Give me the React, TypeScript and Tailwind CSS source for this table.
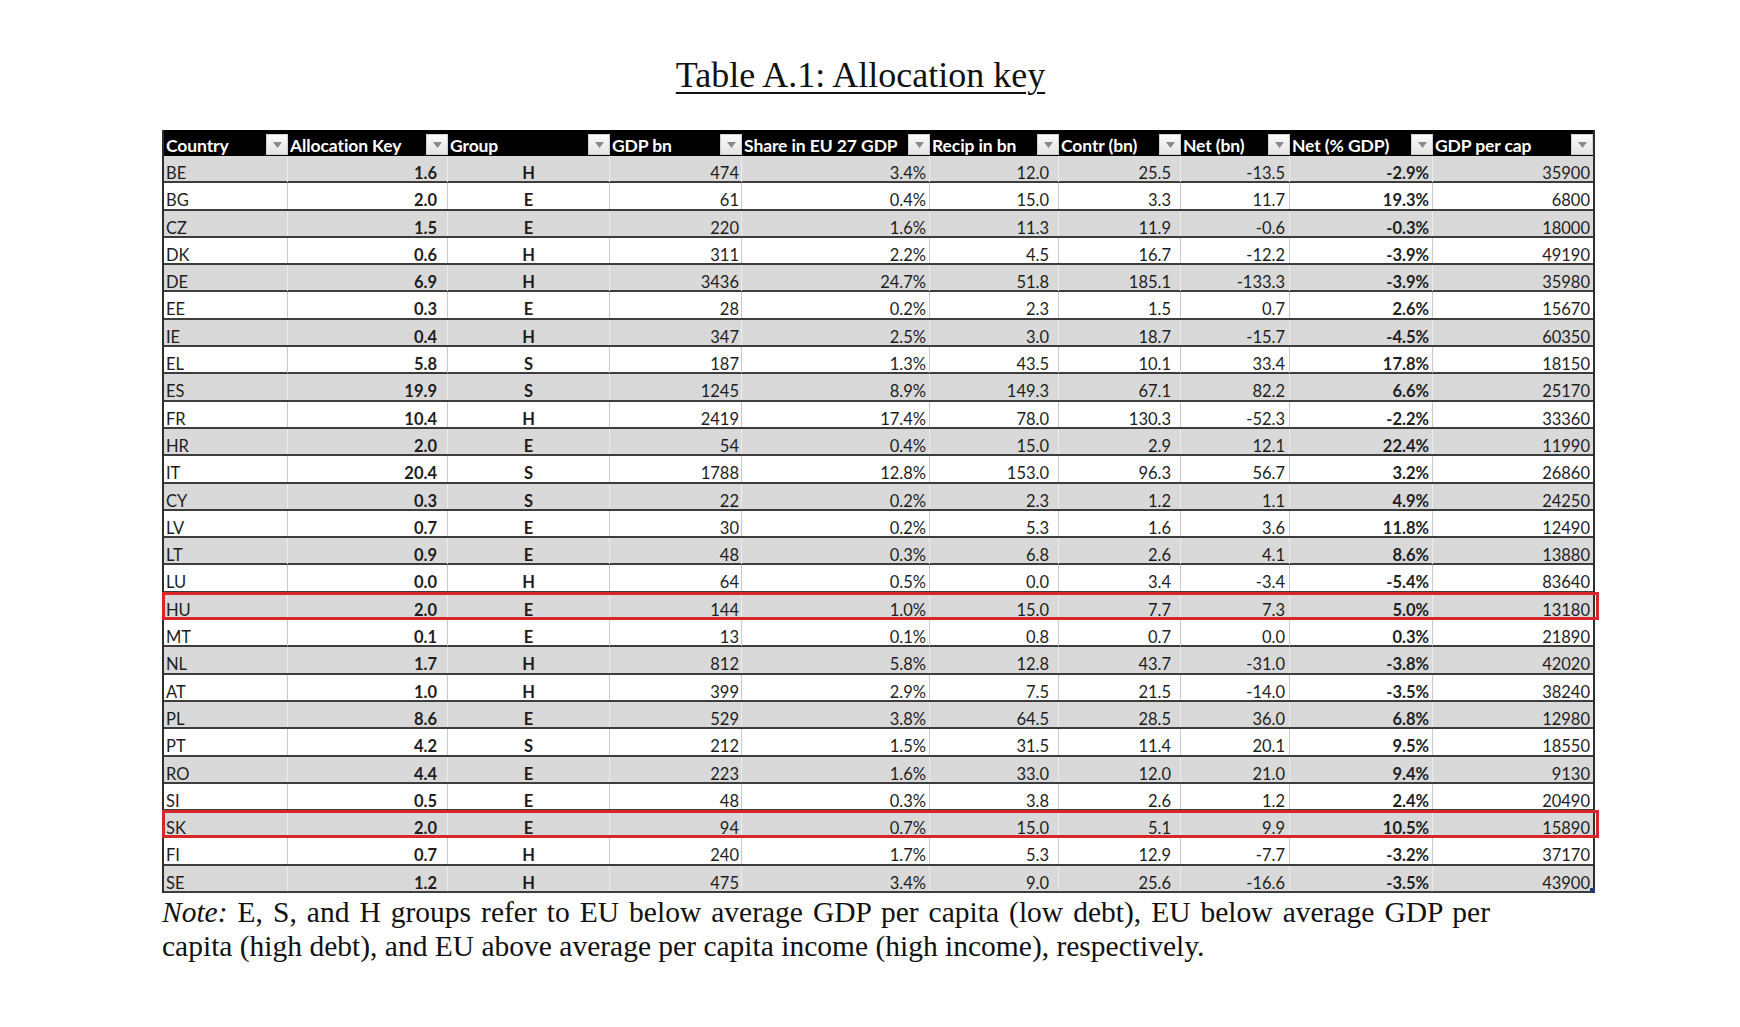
import React from 'react';

type Row = [string, string, string, string, string, string, string, string, string, string];

const rows: Row[] = [
  ['BE', '1.6', 'H', '474', '3.4%', '12.0', '25.5', '-13.5', '-2.9%', '35900'],
  ['BG', '2.0', 'E', '61', '0.4%', '15.0', '3.3', '11.7', '19.3%', '6800'],
  ['CZ', '1.5', 'E', '220', '1.6%', '11.3', '11.9', '-0.6', '-0.3%', '18000'],
  ['DK', '0.6', 'H', '311', '2.2%', '4.5', '16.7', '-12.2', '-3.9%', '49190'],
  ['DE', '6.9', 'H', '3436', '24.7%', '51.8', '185.1', '-133.3', '-3.9%', '35980'],
  ['EE', '0.3', 'E', '28', '0.2%', '2.3', '1.5', '0.7', '2.6%', '15670'],
  ['IE', '0.4', 'H', '347', '2.5%', '3.0', '18.7', '-15.7', '-4.5%', '60350'],
  ['EL', '5.8', 'S', '187', '1.3%', '43.5', '10.1', '33.4', '17.8%', '18150'],
  ['ES', '19.9', 'S', '1245', '8.9%', '149.3', '67.1', '82.2', '6.6%', '25170'],
  ['FR', '10.4', 'H', '2419', '17.4%', '78.0', '130.3', '-52.3', '-2.2%', '33360'],
  ['HR', '2.0', 'E', '54', '0.4%', '15.0', '2.9', '12.1', '22.4%', '11990'],
  ['IT', '20.4', 'S', '1788', '12.8%', '153.0', '96.3', '56.7', '3.2%', '26860'],
  ['CY', '0.3', 'S', '22', '0.2%', '2.3', '1.2', '1.1', '4.9%', '24250'],
  ['LV', '0.7', 'E', '30', '0.2%', '5.3', '1.6', '3.6', '11.8%', '12490'],
  ['LT', '0.9', 'E', '48', '0.3%', '6.8', '2.6', '4.1', '8.6%', '13880'],
  ['LU', '0.0', 'H', '64', '0.5%', '0.0', '3.4', '-3.4', '-5.4%', '83640'],
  ['HU', '2.0', 'E', '144', '1.0%', '15.0', '7.7', '7.3', '5.0%', '13180'],
  ['MT', '0.1', 'E', '13', '0.1%', '0.8', '0.7', '0.0', '0.3%', '21890'],
  ['NL', '1.7', 'H', '812', '5.8%', '12.8', '43.7', '-31.0', '-3.8%', '42020'],
  ['AT', '1.0', 'H', '399', '2.9%', '7.5', '21.5', '-14.0', '-3.5%', '38240'],
  ['PL', '8.6', 'E', '529', '3.8%', '64.5', '28.5', '36.0', '6.8%', '12980'],
  ['PT', '4.2', 'S', '212', '1.5%', '31.5', '11.4', '20.1', '9.5%', '18550'],
  ['RO', '4.4', 'E', '223', '1.6%', '33.0', '12.0', '21.0', '9.4%', '9130'],
  ['SI', '0.5', 'E', '48', '0.3%', '3.8', '2.6', '1.2', '2.4%', '20490'],
  ['SK', '2.0', 'E', '94', '0.7%', '15.0', '5.1', '9.9', '10.5%', '15890'],
  ['FI', '0.7', 'H', '240', '1.7%', '5.3', '12.9', '-7.7', '-3.2%', '37170'],
  ['SE', '1.2', 'H', '475', '3.4%', '9.0', '25.6', '-16.6', '-3.5%', '43900'],
];

const headers = [
  'Country',
  'Allocation Key',
  'Group',
  'GDP bn',
  'Share in EU 27 GDP',
  'Recip in bn',
  'Contr (bn)',
  'Net (bn)',
  'Net (% GDP)',
  'GDP per cap',
];

// per-column cell alignment (matches the spreadsheet's number formats)
const cellClass = [
  'justify-start pl-[2px]',
  'justify-end pr-[10px] font-bold',
  'justify-center font-bold',
  'justify-end pr-[2px]',
  'justify-end pr-[3px]',
  'justify-end pr-[9px]',
  'justify-end pr-[9px]',
  'justify-end pr-[4px]',
  'justify-end pr-[3px] font-bold',
  'justify-end pr-[3px]',
];

const highlighted = ['HU', 'SK'];

const cols = 'grid grid-cols-[124px_160px_162px_132px_188px_129px_122px_109px_143px_160px]';

const Dropdown = () => (
  <div className="w-[22px] h-[21px] shrink-0 self-end bg-gradient-to-b from-[#fbfbfb] to-[#e4e4e4] border border-[#cfcfcf] flex items-center justify-center">
    <svg width="9" height="6" viewBox="0 0 9 6">
      <path d="M0 0 L9 0 L4.5 6 Z" fill="#8a8a8a" />
    </svg>
  </div>
);

const App = () => {
  return (
    <div className="min-h-screen w-full bg-white font-['Lato',sans-serif]">
      <div className="ml-[162px] w-[1433px] pt-[57px]">
        <h1 className="pr-[36px] text-center font-['Liberation_Serif',serif] text-[36px] leading-[36px] text-[#111] underline decoration-2 underline-offset-[5px]">
          Table A.1: Allocation key
        </h1>

        <div className="mt-[37px] border-x-2 border-[#2e2e2e]">
          <div className={`${cols} h-[26px] bg-black`}>
            {headers.map((h) => (
              <div key={h} className="flex items-center pl-[2px] pb-[1px]">
                <span className="flex-1 text-white font-bold text-[17.5px] leading-none whitespace-nowrap overflow-hidden pt-[7px] tracking-[-0.1px]">
                  {h}
                </span>
                <Dropdown />
              </div>
            ))}
          </div>

          {rows.map((r, idx) => {
            const gray = idx % 2 === 0;
            return (
              <div
                key={r[0]}
                className={`${cols} relative h-[27.3px] border-b-2 border-[#3d3d3d] ${gray ? 'bg-[#d9d9d9]' : 'bg-white'}`}
              >
                {r.map((v, i) => (
                  <div
                    key={i}
                    className={`flex items-start pt-[9px] text-[16.5px] leading-none text-[#1e1e1e] ${cellClass[i]} ${
                      i < 9 ? (gray ? 'border-r border-[#ececec]' : 'border-r border-[#c9c9c9]') : ''
                    }`}
                  >
                    {v}
                  </div>
                ))}
                {highlighted.includes(r[0]) && (
                  <div className="absolute -left-[2px] -right-[6px] -top-[1px] -bottom-[2px] border-[3px] border-[#d8262b] pointer-events-none" />
                )}
                {idx === rows.length - 1 && (
                  <div className="absolute -right-[2px] -bottom-[2px] w-[5px] h-[5px] bg-[#1f3b7a]" />
                )}
              </div>
            );
          })}
        </div>

        <div className="mt-[2px] font-['Liberation_Serif',serif] text-[29.5px] leading-[34px] text-[#111]">
          <p className="w-[1328px] text-justify [text-align-last:justify]">
            <i>Note:</i> E, S, and H groups refer to EU below average GDP per capita (low debt), EU below average GDP per
          </p>
          <p>capita (high debt), and EU above average per capita income (high income), respectively.</p>
        </div>
      </div>
    </div>
  );
};

export default App;
